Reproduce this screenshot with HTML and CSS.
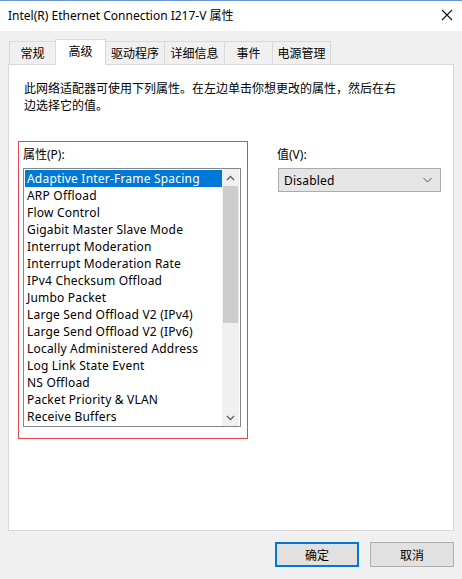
FILE: index.html
```html
<!DOCTYPE html>
<html>
<head>
<meta charset="utf-8">
<link rel="stylesheet" href="styles.css">
</head>
<body>
<div class="window">
  <div class="titlebar">
    <span class="title">Intel(R) Ethernet Connection I217-V 属性</span>
    <svg class="close" width="12" height="12" viewBox="0 0 12 12"><path d="M1 1 L11 11 M11 1 L1 11" stroke="#111" stroke-width="1.1" fill="none"/></svg>
  </div>
  <div class="content">
    <div class="tabs">
      <div class="tab t1">常规</div>
      <div class="tab active t2">高级</div>
      <div class="tab t3">驱动程序</div>
      <div class="tab t4">详细信息</div>
      <div class="tab t5">事件</div>
      <div class="tab t6">电源管理</div>
    </div>
    <div class="panel">
      <p class="desc">此网络适配器可使用下列属性。在左边单击你想更改的属性，然后在右<br>边选择它的值。</p>
      <div class="cols">
        <div class="redbox">
          <div class="label">属性(P):</div>
          <div class="listbox">
            <div class="items">
              <div class="item sel">Adaptive Inter-Frame Spacing</div>
              <div class="item">ARP Offload</div>
              <div class="item">Flow Control</div>
              <div class="item">Gigabit Master Slave Mode</div>
              <div class="item">Interrupt Moderation</div>
              <div class="item">Interrupt Moderation Rate</div>
              <div class="item">IPv4 Checksum Offload</div>
              <div class="item">Jumbo Packet</div>
              <div class="item">Large Send Offload V2 (IPv4)</div>
              <div class="item">Large Send Offload V2 (IPv6)</div>
              <div class="item">Locally Administered Address</div>
              <div class="item">Log Link State Event</div>
              <div class="item">NS Offload</div>
              <div class="item">Packet Priority &amp; VLAN</div>
              <div class="item">Receive Buffers</div>
            </div>
            <div class="scrollbar">
              <div class="arrow"><svg width="9" height="6" viewBox="0 0 9 6"><path d="M1 5 L4.5 1.5 L8 5" stroke="#606060" stroke-width="1.3" fill="none"/></svg></div>
              <div class="thumb"></div>
              <div class="track"></div>
              <div class="arrow"><svg width="9" height="6" viewBox="0 0 9 6"><path d="M1 1 L4.5 4.5 L8 1" stroke="#606060" stroke-width="1.3" fill="none"/></svg></div>
            </div>
          </div>
        </div>
        <div class="valuecol">
          <div class="label vlabel">值(V):</div>
          <div class="select">
            <span>Disabled</span>
            <svg width="9" height="6" viewBox="0 0 9 6"><path d="M0.5 1 L4.5 5 L8.5 1" stroke="#555" stroke-width="1" fill="none"/></svg>
          </div>
        </div>
      </div>
    </div>
    <div class="buttons">
      <div class="btn default">确定</div>
      <div class="btn">取消</div>
    </div>
  </div>
</div>
</body>
</html>
```
FILE: styles.css
```css
* { box-sizing: border-box; }
html, body { margin: 0; padding: 0; }
body {
  width: 462px;
  height: 579px;
  background: #f0f0f0;
  font-family: "Noto Sans", "Noto Sans CJK SC", sans-serif;
  font-size: 12px;
  color: #000;
  overflow: hidden;
}
.window { width: 462px; height: 579px; }
.titlebar {
  height: 31px;
  background: #fff;
  border-top: 1px solid #6a93d8;
  display: flex;
  align-items: center;
  justify-content: space-between;
  padding: 0 8px 2px 8px;
}
.title { font-size: 12px; letter-spacing: 0; }
.close { margin-right: 1px; }
.content { padding: 0 8px; }
.tabs {
  display: flex;
  height: 33px;
  align-items: flex-end;
  padding-left: 1px;
}
.tab {
  height: 23px;
  border: 1px solid #d9d9d9;
  border-bottom: none;
  border-right: none;
  background: #f0f0f0;
  display: flex;
  align-items: center;
  justify-content: center;
  margin-bottom: 0;
}
.tab:last-child { border-right: 1px solid #d9d9d9; }
.tab.active {
  height: 26px;
  background: #fff;
  border: 1px solid #d9d9d9;
  border-bottom: none;
  margin-bottom: -1px;
  position: relative;
  z-index: 1;
  align-items: flex-start;
  padding-top: 2px;
}
.tab.active + .tab { border-left: none; }
.t1 { width: 46px; }
.t2 { width: 51px; }
.t3 { width: 58px; }
.t4 { width: 60px; }
.t5 { width: 48px; }
.t6 { width: 59px; }
.panel {
  width: 446px;
  height: 467px;
  background: #fff;
  border: 1px solid #d9d9d9;
  padding: 15px 9px 0 9px;
}
.desc {
  margin: 0 0 0 6px;
  line-height: 17px;
}
.cols {
  display: flex;
  margin-top: 27px;
  gap: 28px;
}
.redbox {
  width: 230px;
  height: 298px;
  border: 1px solid #e2474f;
  padding: 4px 5px 0 4px;
}
.label { height: 22px; line-height: 18px; }
.listbox {
  width: 218px;
  height: 259px;
  border: 1px solid #828790;
  display: flex;
  padding: 1px 1px 1px 1px;
}
.items { flex: 1; overflow: hidden; }
.item {
  height: 17px;
  line-height: 17px;
  padding-left: 2px;
  white-space: nowrap;
  letter-spacing: 0.2px;
}
.item.sel { background: #0078d7; color: #fff; }
.scrollbar {
  width: 17px;
  display: flex;
  flex-direction: column;
  background: #f0f0f0;
  margin: -1px 0 -1px 0;
}
.arrow {
  height: 17px;
  display: flex;
  align-items: center;
  justify-content: center;
}
.thumb {
  height: 137px;
  background: #cdcdcd;
  margin: 0 1px;
}
.track { flex: 1; }
.valuecol { padding-top: 5px; }
.vlabel { margin-left: 1px; }
.select {
  margin-left: 2px;
  width: 163px;
  height: 24px;
  background: #e5e5e5;
  border: 1px solid #acacac;
  display: flex;
  align-items: center;
  justify-content: space-between;
  padding: 0 8px 0 5px;
  letter-spacing: 0.2px;
}
.buttons {
  display: flex;
  justify-content: flex-end;
  gap: 11px;
  margin-top: 11px;
  padding-right: 0;
}
.btn {
  width: 84px;
  height: 25px;
  background: #e1e1e1;
  border: 1px solid #adadad;
  display: flex;
  align-items: center;
  justify-content: center;
}
.btn.default { border: 2px solid #0078d7; }
```
